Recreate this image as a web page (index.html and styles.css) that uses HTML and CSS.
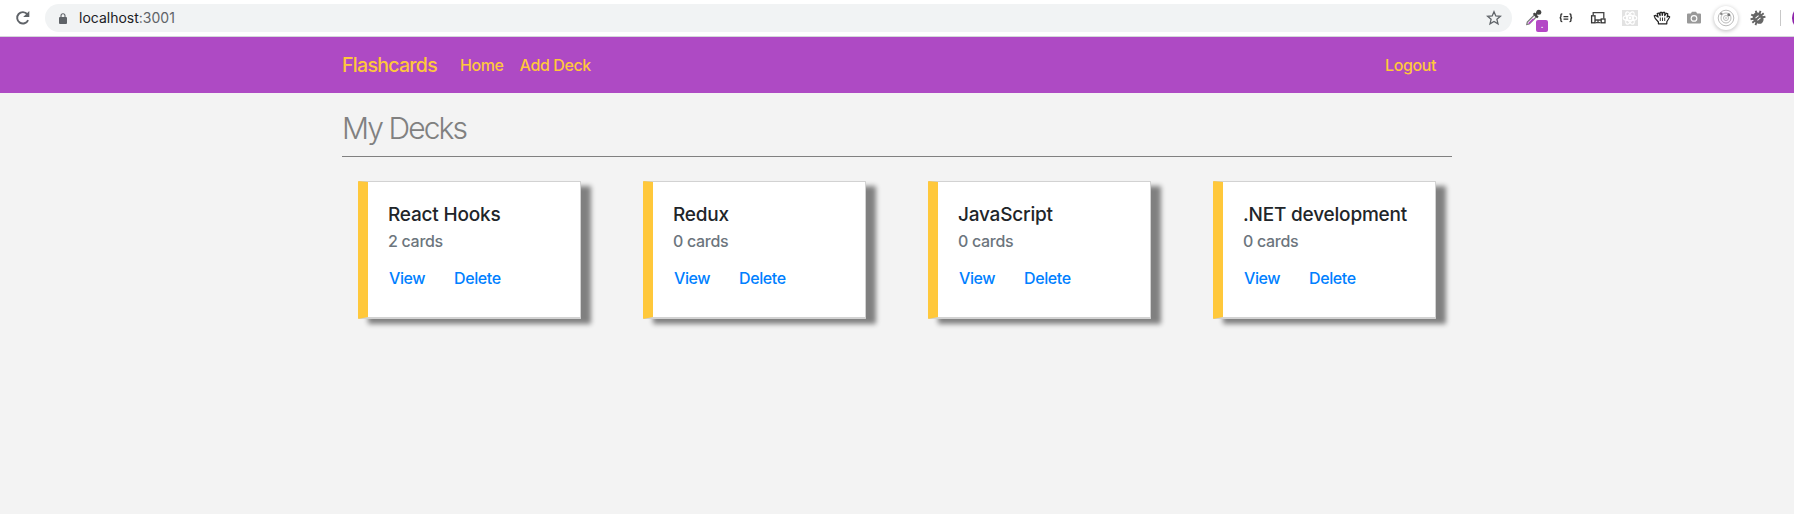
FILE: index.html
```html
<!DOCTYPE html>
<html lang="en">
<head>
<meta charset="utf-8">
<title>Flashcards</title>
<link rel="stylesheet" href="styles.css">
</head>
<body>
<div class="toolbar">
  <svg class="reload" width="16" height="16" viewBox="0 0 16 16"><path d="M13.1 10.1A5.7 5.7 0 1 1 12.3 4.2" fill="none" stroke="#5f6368" stroke-width="1.9"/><path d="M14.3 1v6.1H8.2z" fill="#5f6368"/></svg>
  <div class="omnibox">
    <svg class="lock" width="8" height="11" viewBox="0 0 8 11"><path d="M2 5V2.8a2 2 0 0 1 4 0V5" fill="none" stroke="#5f6368" stroke-width="1.1"/><rect y="4" width="8" height="7" rx="1" fill="#5f6368"/></svg>
    <span class="url">localhost<span class="port">:3001</span></span>
    <svg class="star" width="16" height="16" viewBox="0 0 16 16"><path d="M8 1.7l1.8 4.2 4.6.4-3.5 3 1.1 4.5L8 11.4l-4 2.4 1.1-4.5-3.5-3 4.6-.4z" fill="none" stroke="#5f6368" stroke-width="1.3"/></svg>
  </div>
  <div class="extensions">
    <span class="ext picker"><svg width="20" height="20" viewBox="0 0 20 20"><path d="M2.8 16.4l.5-2.3 7-7 1.9 1.9-7 7z" fill="#fff" stroke="#777" stroke-width="1.2"/><path d="M3.7 15.4l4.7-4.7h2.4l-5 5z" fill="#b448c6"/><path d="M9.6 5.2l4.3 4.3M11.5 6.8l3-3" stroke="#444" stroke-width="2.2"/><circle cx="14.8" cy="4.2" r="2.5" fill="#444"/></svg><span class="badge">.</span></span>
    <svg class="ext" width="20" height="20" viewBox="0 0 20 20"><path d="M6.3 6H5.8Q4.9 6 4.9 7V8.6Q4.9 9.6 3.8 9.8Q4.9 10 4.9 11V12.6Q4.9 13.6 5.8 13.6H6.3M13.5 6h.5q.9 0 .9 1v1.6q0 1 1.1 1.2q-1.1.2-1.1 1.2v1.6q0 1-.9 1h-.5" fill="none" stroke="#333" stroke-width="1.4"/><path d="M7.5 8.7h4.8M7.5 11.1h4.8" stroke="#333" stroke-width="1.3"/></svg>
    <svg class="ext" width="20" height="20" viewBox="0 0 20 20"><path d="M5.2 7V4.6h10.6v6" fill="none" stroke="#444" stroke-width="1.3"/><path d="M6.5 12h6.5M10 12v2.3M7.5 14.6h5" stroke="#444" stroke-width="1.3"/><rect x="3.6" y="7.8" width="3.4" height="7" fill="#fff" stroke="#333" stroke-width="1.3"/><rect x="13.2" y="11" width="3.8" height="3.8" fill="#fff" stroke="#333" stroke-width="1.3"/></svg>
    <svg class="ext" width="20" height="20" viewBox="0 0 20 20"><rect x="2" y="2" width="16" height="16" fill="#e2e2e2"/><g fill="none" stroke="#fff" stroke-width="1.2"><ellipse cx="10" cy="10" rx="6.8" ry="2.7"/><ellipse cx="10" cy="10" rx="6.8" ry="2.7" transform="rotate(60 10 10)"/><ellipse cx="10" cy="10" rx="6.8" ry="2.7" transform="rotate(120 10 10)"/></g><circle cx="10" cy="10" r="1.4" fill="#fff"/></svg>
    <svg class="ext" width="20" height="20" viewBox="0 0 20 20"><path d="M6.4 15.8V14L3.2 10.4 2.2 7.9l1.6-.5 2.3 1.7L5.2 5.6l1.6-.6 1.3 2.7V4.3h1.8l.4 3 .7-3h1.8l-.1 3.4 1.6-2.5 1.5.7-.7 3.2 1.6-1 1 .9-2.9 4.8V15.8z" fill="#fff" stroke="#222" stroke-width="1.2" stroke-linejoin="round"/><path d="M8.3 9.5v3.5M10.5 9.5v3.5M12.7 9.5v3.5" stroke="#222" stroke-width=".9"/></svg>
    <svg class="ext" width="20" height="20" viewBox="0 0 20 20"><path d="M4 5.4h2.8L8 3.8h4l1.2 1.6H16q1 0 1 1v8.2q0 1-1 1H4q-1 0-1-1V6.4q0-1 1-1z" fill="#999"/><circle cx="10" cy="10.4" r="3.4" fill="#fff"/><circle cx="10" cy="10.4" r="2.2" fill="#999"/></svg>
    <span class="ext disc"><svg width="20" height="20" viewBox="0 0 20 20"><g fill="none" stroke="#bbb" stroke-width="1"><circle cx="10" cy="10" r="7.8"/><circle cx="10" cy="10" r="5"/><circle cx="10" cy="10" r="2.5"/></g><circle cx="5.3" cy="5.8" r="1.3" fill="#888"/><circle cx="12.8" cy="6.8" r="1.5" fill="#777"/><circle cx="10" cy="10" r="1" fill="#ccc"/></svg></span>
    <svg class="ext" width="20" height="20" viewBox="0 0 20 20"><g transform="rotate(-40 10 10)"><path d="M3.5 6.2l13 7.6M3.5 13.8l13-7.6M2.6 10h14.8M7 3l1.5 3M13 3l-1.5 3" stroke="#666" stroke-width="1.9"/><ellipse cx="10" cy="10.2" rx="4.9" ry="6.2" fill="#666"/><path d="M8 8.5h4M8 11.5h4" stroke="#fff" stroke-width="1"/></g></svg>
  </div>
  <span class="divider"></span>
  <span class="profile"></span>
</div>
<nav class="navbar">
  <div class="container nav-row">
    <a class="brand">Flashcards</a>
    <a class="link home">Home</a>
    <a class="link add">Add Deck</a>
    <a class="link logout">Logout</a>
  </div>
</nav>
<main class="container">
  <h1 class="title">My Decks</h1>
  <div class="decks">
    <section class="card"><h2 class="name hooks">React Hooks</h2><p class="count">2 cards</p><div class="actions"><a class="view">View</a><a>Delete</a></div></section>
    <section class="card"><h2 class="name">Redux</h2><p class="count">0 cards</p><div class="actions"><a class="view">View</a><a>Delete</a></div></section>
    <section class="card"><h2 class="name">JavaScript</h2><p class="count">0 cards</p><div class="actions"><a class="view">View</a><a>Delete</a></div></section>
    <section class="card"><h2 class="name">.NET development</h2><p class="count">0 cards</p><div class="actions"><a class="view">View</a><a>Delete</a></div></section>
  </div>
</main>
</body>
</html>
```
FILE: styles.css
```css
* { box-sizing: border-box; }
body { margin: 0; height: 514px; overflow: hidden; background: #f3f3f3; font-family: Inter, "Liberation Sans", sans-serif; font-size: 16px; line-height: 24px; }
svg { display: block; flex: none; }
.toolbar { display: flex; align-items: center; height: 37px; background: #fff; border-bottom: 1px solid #d5d6da; overflow: hidden; }
.reload { margin-left: 15px; }
.omnibox { display: flex; align-items: center; width: 1467px; height: 28px; margin-left: 14px; padding: 0 10px 0 14px; border-radius: 14px; background: #f1f3f4; flex: none; }
.url { margin-left: 12px; font-size: 14px; letter-spacing: 0; color: #202124; }
.port { color: #5f6368; }
.star { margin-left: auto; }
.extensions { display: flex; gap: 12px; margin-left: 12px; }
.ext { flex: none; width: 20px; height: 20px; }
.picker { position: relative; }
.badge { position: absolute; left: 12px; top: 12px; width: 12px; height: 12px; border-radius: 2px; background: #b448c6; color: #fff; font-size: 9px; line-height: 10px; text-align: center; }
.disc { border-radius: 50%; background: #fff; box-shadow: 0 0 0 2px #fff, 0 1px 4px 2px #bbb; }
.divider { width: 1px; height: 16px; margin-left: 12px; background: #c8c8c8; flex: none; }
.profile { width: 24px; height: 24px; margin-left: 11px; border-radius: 50%; background: #8e24aa; flex: none; }
.navbar { height: 56px; background: #ae4ac4; color: #ffc83b; }
.container { width: 1110px; margin: 0 auto; }
.nav-row { display: flex; align-items: center; height: 56px; }
.brand { width: 118px; font-size: 19.5px; font-weight: 450; letter-spacing: -.7px; }
.link { font-weight: 450; letter-spacing: -.4px; }
.add { margin-left: 16px; }
.logout { margin-left: auto; margin-right: 16px; }
.title { height: 64px; margin: 0 0 24px; padding-top: 15px; border-bottom: 1px solid #808080; color: #808080; font-size: 30px; line-height: 40px; font-weight: 300; letter-spacing: -1.9px; }
.decks { display: flex; gap: 62px; padding-left: 16px; }
.card { width: 223px; height: 138px; padding: 21px 0 0 20px; background: #fff; border: 1px solid #d2d2d2; border-left: 10px solid #ffc83b; border-bottom-width: 2px; border-radius: 1px; box-shadow: 10px 5px 5px #808080; flex: none; }
.name { margin: 0; font-size: 19px; line-height: 24px; font-weight: 550; letter-spacing: -.2px; color: #212529; white-space: nowrap; }
.count { margin: 2px 0 0; font-weight: 500; letter-spacing: -.3px; color: #6c757d; }
.actions { display: flex; margin-top: 13px; padding-left: 1px; font-weight: 450; letter-spacing: -.4px; color: #0080ff; }
.view { width: 65px; }
```
